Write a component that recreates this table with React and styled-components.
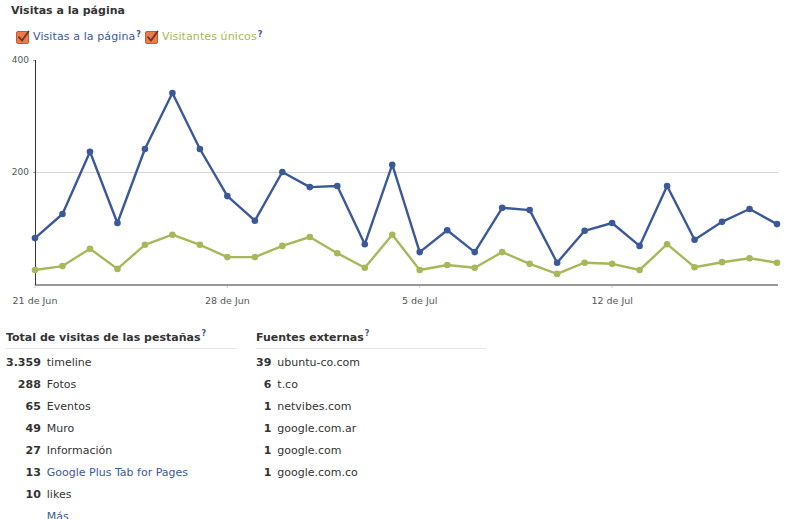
import React from 'react'
import styled, { createGlobalStyle } from 'styled-components'

const GlobalStyle = createGlobalStyle`
  body {
    margin: 0;
    background: #fff;
    font-family: "DejaVu Sans", Verdana, sans-serif;
    font-size: 11px;
    color: #333;
  }
`

const BLUE = '#3b5998'
const GREEN = '#a7b85a'

// daily values, 21 de Jun .. 17 de Jul
const pageViews = [82, 125, 236, 109, 241, 341, 241, 157, 113, 200, 173, 175, 71, 213, 57, 96, 57, 136, 132, 38, 95, 109, 68, 175, 79, 111, 134, 107]
const uniques = [25, 32, 63, 27, 70, 88, 70, 48, 48, 68, 84, 55, 29, 88, 25, 34, 29, 57, 36, 18, 38, 36, 25, 71, 30, 39, 46, 38]

const tabs = [
  { count: '3.359', label: 'timeline' },
  { count: '288', label: 'Fotos' },
  { count: '65', label: 'Eventos' },
  { count: '49', label: 'Muro' },
  { count: '27', label: 'Información' },
  { count: '13', label: 'Google Plus Tab for Pages', link: true },
  { count: '10', label: 'likes' },
]

const sources = [
  { count: '39', label: 'ubuntu-co.com' },
  { count: '6', label: 't.co' },
  { count: '1', label: 'netvibes.com' },
  { count: '1', label: 'google.com.ar' },
  { count: '1', label: 'google.com' },
  { count: '1', label: 'google.com.co' },
]

const Page = styled.div`
  width: 796px;
  height: 519px;
  overflow: hidden;
`

const Title = styled.h2`
  margin: 0;
  padding: 4px 0 0 11px;
  font-size: 11px;
  line-height: 14px;
  font-weight: bold;
  color: #333;
`

const Legend = styled.div`
  display: flex;
  align-items: center;
  gap: 4px;
  padding: 11px 0 0 16px;
  height: 16px;
`

const LegendItem = styled.label`
  display: flex;
  align-items: center;
  gap: 3px;
  color: ${p => p.$color};
  font-size: 11px;
  line-height: 14px;
  letter-spacing: 0.1px;
`

const Help = styled.span`
  display: inline-block;
  font-size: 8px;
  font-weight: bold;
  color: ${BLUE};
  line-height: 8px;
  margin-left: 1px;
  vertical-align: top;
  position: relative;
  top: ${p => (p.$high ? '-1px' : '1px')};
`

const ChartBox = styled.div`
  margin-top: 6px;
  height: 262px;
`

const Tables = styled.div`
  display: flex;
  gap: 20px;
  padding: 13px 0 0 6px;
`

const Column = styled.div`
  width: 230px;
`

const ColumnTitle = styled.div`
  font-weight: bold;
  line-height: 14px;
  padding: 5px 0 3px;
  border-bottom: 1px solid #e5e5e5;
`

const Table = styled.table`
  border-collapse: collapse;
  margin-top: 2px;
`

const Row = styled.tr`
  height: 22px;
`

const Count = styled.td`
  text-align: right;
  font-weight: bold;
  padding: 0 6px 0 0;
  white-space: nowrap;
`

const Label = styled.td`
  padding: 0;
  color: ${p => (p.$link ? BLUE : '#333')};
  white-space: nowrap;
`

const More = styled.a`
  color: ${BLUE};
  text-decoration: none;
`

function Checkbox() {
  return (
    <svg width="14" height="14" viewBox="0 0 14 14">
      <rect x="0.5" y="1.5" width="12" height="12" rx="1.5" fill="#ec7a4a" stroke="#c45a34" />
      <path d="M3 7.2 L6 10.5 L12.5 1.5" fill="none" stroke="#6b3726" strokeWidth="1.8" strokeLinecap="round" />
    </svg>
  )
}

const L = 35
const R = 777
const BOTTOM = 233
const TOP = 9
const stepX = (R - L) / 27
const px = i => L + i * stepX
const py = v => BOTTOM - (v / 400) * (BOTTOM - TOP)

function Series({ data, color }) {
  const pts = data.map((v, i) => `${px(i).toFixed(1)},${py(v).toFixed(1)}`).join(' ')
  return (
    <g>
      <polyline points={pts} fill="none" stroke={color} strokeWidth="2.4" strokeLinejoin="round" />
      {data.map((v, i) => (
        <circle key={i} cx={px(i)} cy={py(v)} r="3.3" fill={color} />
      ))}
    </g>
  )
}

function Chart() {
  const ticks = [
    { i: 0, label: '21 de Jun' },
    { i: 7, label: '28 de Jun' },
    { i: 14, label: '5 de Jul' },
    { i: 21, label: '12 de Jul' },
  ]
  return (
    <svg width="796" height="262" style={{ display: 'block' }}>
      <line x1={L} x2={R + 1} y1={py(200) + 0.5} y2={py(200) + 0.5} stroke="#d4d4d4" />
      <line x1={L - 2} x2={L} y1={py(400) + 0.5} y2={py(400) + 0.5} stroke="#999" />
      <line x1={L - 2} x2={L} y1={py(200) + 0.5} y2={py(200) + 0.5} stroke="#999" />
      <text x="29" y={py(400) + 3} textAnchor="end" fontSize="9" fill="#555" fontFamily="DejaVu Sans">400</text>
      <text x="29" y={py(200) + 3} textAnchor="end" fontSize="9" fill="#555" fontFamily="DejaVu Sans">200</text>
      {ticks.map(t => (
        <g key={t.i}>
          <line x1={px(t.i)} x2={px(t.i)} y1={BOTTOM} y2={BOTTOM + 4} stroke="#ccc" />
          <text x={px(t.i)} y={BOTTOM + 20} textAnchor="middle" fontSize="9.5" fill="#555" fontFamily="DejaVu Sans">
            {t.label}
          </text>
        </g>
      ))}
      <line x1={L} x2={R + 1} y1={BOTTOM + 1} y2={BOTTOM + 1} stroke="#999" strokeWidth="2" />
      <line x1={L + 0.5} x2={L + 0.5} y1={TOP} y2={BOTTOM + 1} stroke="#333" />
      <Series data={uniques} color={GREEN} />
      <Series data={pageViews} color={BLUE} />
    </svg>
  )
}

function StatTable({ title, rows, more }) {
  return (
    <Column>
      <ColumnTitle>
        {title}
        <Help $high>?</Help>
      </ColumnTitle>
      <Table>
        <tbody>
          {rows.map((r, idx) => (
            <Row key={idx}>
              <Count>{r.count}</Count>
              <Label $link={r.link}>{r.label}</Label>
            </Row>
          ))}
          {more && (
            <Row>
              <Count />
              <Label>
                <More href="#">Más</More>
              </Label>
            </Row>
          )}
        </tbody>
      </Table>
    </Column>
  )
}

export default function App() {
  return (
    <Page>
      <GlobalStyle />
      <Title>Visitas a la página</Title>
      <Legend>
        <LegendItem $color={BLUE}>
          <Checkbox />
          <span>
            Visitas a la página<Help>?</Help>
          </span>
        </LegendItem>
        <LegendItem $color={GREEN}>
          <Checkbox />
          <span>
            Visitantes únicos<Help>?</Help>
          </span>
        </LegendItem>
      </Legend>
      <ChartBox>
        <Chart />
      </ChartBox>
      <Tables>
        <StatTable title="Total de visitas de las pestañas" rows={tabs} more />
        <StatTable title="Fuentes externas" rows={sources} />
      </Tables>
    </Page>
  )
}
